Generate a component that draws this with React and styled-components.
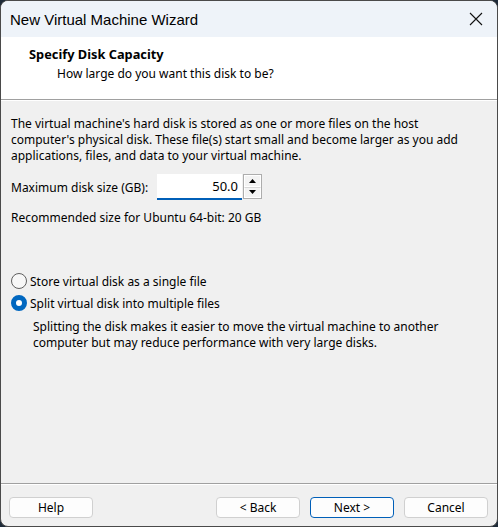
import React from 'react';
import styled, { createGlobalStyle } from 'styled-components';

const GlobalStyle = createGlobalStyle`
  html, body {
    margin: 0;
    padding: 0;
    background: #1d2a38;
  }
  body {
    font-family: 'Segoe UI', 'Noto Sans', 'Liberation Sans', Arial, sans-serif;
    font-size: 12px;
    color: #000;
  }
`;

const Window = styled.div`
  width: 498px;
  height: 527px;
  box-sizing: border-box;
  border: 1px solid #4a4a4a;
  border-radius: 8px;
  overflow: hidden;
  background: #f0f0f0;
  display: flex;
  flex-direction: column;
`;

const TitleBar = styled.div`
  height: 36px;
  flex: none;
  display: flex;
  align-items: center;
  justify-content: space-between;
  padding: 0 0 0 9px;
  background: #eef3f9;
  font-size: 15px;
  font-family: 'Liberation Sans', Arial, sans-serif;
`;

const CloseButton = styled.div`
  width: 42px;
  height: 36px;
  display: flex;
  align-items: center;
  justify-content: center;
`;

const Header = styled.div`
  height: 63px;
  flex: none;
  background: #fff;
  padding: 9px 0 0 28px;
  box-sizing: border-box;
  border-bottom: 1px solid #a0a0a0;
  box-shadow: 0 1px 0 #fff;
`;

const HeaderTitle = styled.div`
  font-weight: bold;
  font-size: 12.8px;
  line-height: 16px;
`;

const HeaderSub = styled.div`
  margin: 4px 0 0 28px;
  line-height: 16px;
`;

const Body = styled.div`
  flex: 1;
  padding: 16px 10px 0;
  border-bottom: 1px solid #a0a0a0;
  display: flex;
  flex-direction: column;
`;

const Para = styled.p`
  margin: 0;
  line-height: 16px;
  white-space: nowrap;
  padding-left: ${p => p.$indent || 0}px;
`;

const SizeRow = styled.div`
  display: flex;
  align-items: center;
  margin-top: 10px;
  height: 26px;
`;

const Label = styled.span`
  width: 146px;
`;

const NumberInput = styled.div`
  width: 85px;
  height: 26px;
  box-sizing: border-box;
  background: #fff;
  border-bottom: 2px solid #005fb8;
  display: flex;
  align-items: center;
  justify-content: flex-end;
  padding-right: 4px;
  font-size: 13px;
`;

const Spinner = styled.div`
  width: 19px;
  height: 25px;
  box-sizing: border-box;
  margin-left: 1px;
  align-self: flex-start;
  border: 1px solid #adadad;
  display: flex;
  flex-direction: column;
`;

const SpinButton = styled.div`
  flex: 1;
  display: flex;
  align-items: center;
  justify-content: center;
  background: #f3f3f3;
  border: 1px solid #fff;
  & + & {
    border-top: 1px solid #d8d8d8;
  }
`;

const Recommended = styled.div`
  margin-top: 10px;
  line-height: 16px;
`;

const RadioGroup = styled.div`
  margin-top: 47px;
  display: flex;
  flex-direction: column;
  gap: 6px;
`;

const RadioRow = styled.label`
  display: flex;
  align-items: center;
  gap: 3px;
  height: 16px;
`;

const RadioCircle = styled.span`
  width: 16px;
  height: 16px;
  box-sizing: border-box;
  border-radius: 50%;
  flex: none;
  border: ${p => (p.$checked ? '5px solid #0067c0' : '1px solid #5f5f5f')};
  background: ${p => (p.$checked ? '#fff' : '#f7f7f7')};
`;

const Description = styled.div`
  margin-top: 8px;
`;

const Footer = styled.div`
  height: 42px;
  flex: none;
  display: flex;
  align-items: flex-start;
  padding: 13px 9px 0 8px;
  box-sizing: border-box;
  gap: 10px;
  box-shadow: inset 0 1px 0 #fff;
`;

const Button = styled.div`
  width: 84px;
  height: 21px;
  box-sizing: border-box;
  background: #fdfdfd;
  border: 1px solid ${p => (p.$primary ? '#005fb8' : '#d0d0d0')};
  border-radius: 4px;
  display: flex;
  align-items: center;
  justify-content: center;
  margin-left: ${p => (p.$push ? 'auto' : '0')};
`;

const Arrow = ({ up }) => (
  <svg width="7" height="4" viewBox="0 0 7 4">
    <path d={up ? 'M0 4 L3.5 0 L7 4 Z' : 'M0 0 L3.5 4 L7 0 Z'} fill="#000" />
  </svg>
);

export default function App() {
  return (
    <>
      <GlobalStyle />
      <Window>
        <TitleBar>
          <span>New Virtual Machine Wizard</span>
          <CloseButton>
            <svg width="14" height="14" viewBox="0 0 14 14">
              <path d="M1 1 L13 13 M13 1 L1 13" stroke="#111" strokeWidth="1.1" />
            </svg>
          </CloseButton>
        </TitleBar>
        <Header>
          <HeaderTitle>Specify Disk Capacity</HeaderTitle>
          <HeaderSub>How large do you want this disk to be?</HeaderSub>
        </Header>
        <Body>
          <Para>
            The virtual machine's hard disk is stored as one or more files on the host
            <br />
            computer's physical disk. These file(s) start small and become larger as you add
            <br />
            applications, files, and data to your virtual machine.
          </Para>
          <SizeRow>
            <Label>Maximum disk size (GB):</Label>
            <NumberInput>50.0</NumberInput>
            <Spinner>
              <SpinButton><Arrow up /></SpinButton>
              <SpinButton><Arrow /></SpinButton>
            </Spinner>
          </SizeRow>
          <Recommended>Recommended size for Ubuntu 64-bit: 20 GB</Recommended>
          <RadioGroup>
            <RadioRow>
              <RadioCircle />
              Store virtual disk as a single file
            </RadioRow>
            <RadioRow>
              <RadioCircle $checked />
              Split virtual disk into multiple files
            </RadioRow>
          </RadioGroup>
          <Description>
            <Para $indent={22}>
              Splitting the disk makes it easier to move the virtual machine to another
              <br />
              computer but may reduce performance with very large disks.
            </Para>
          </Description>
        </Body>
        <Footer>
          <Button>Help</Button>
          <Button $push>&lt; Back</Button>
          <Button $primary>Next &gt;</Button>
          <Button>Cancel</Button>
        </Footer>
      </Window>
    </>
  );
}
